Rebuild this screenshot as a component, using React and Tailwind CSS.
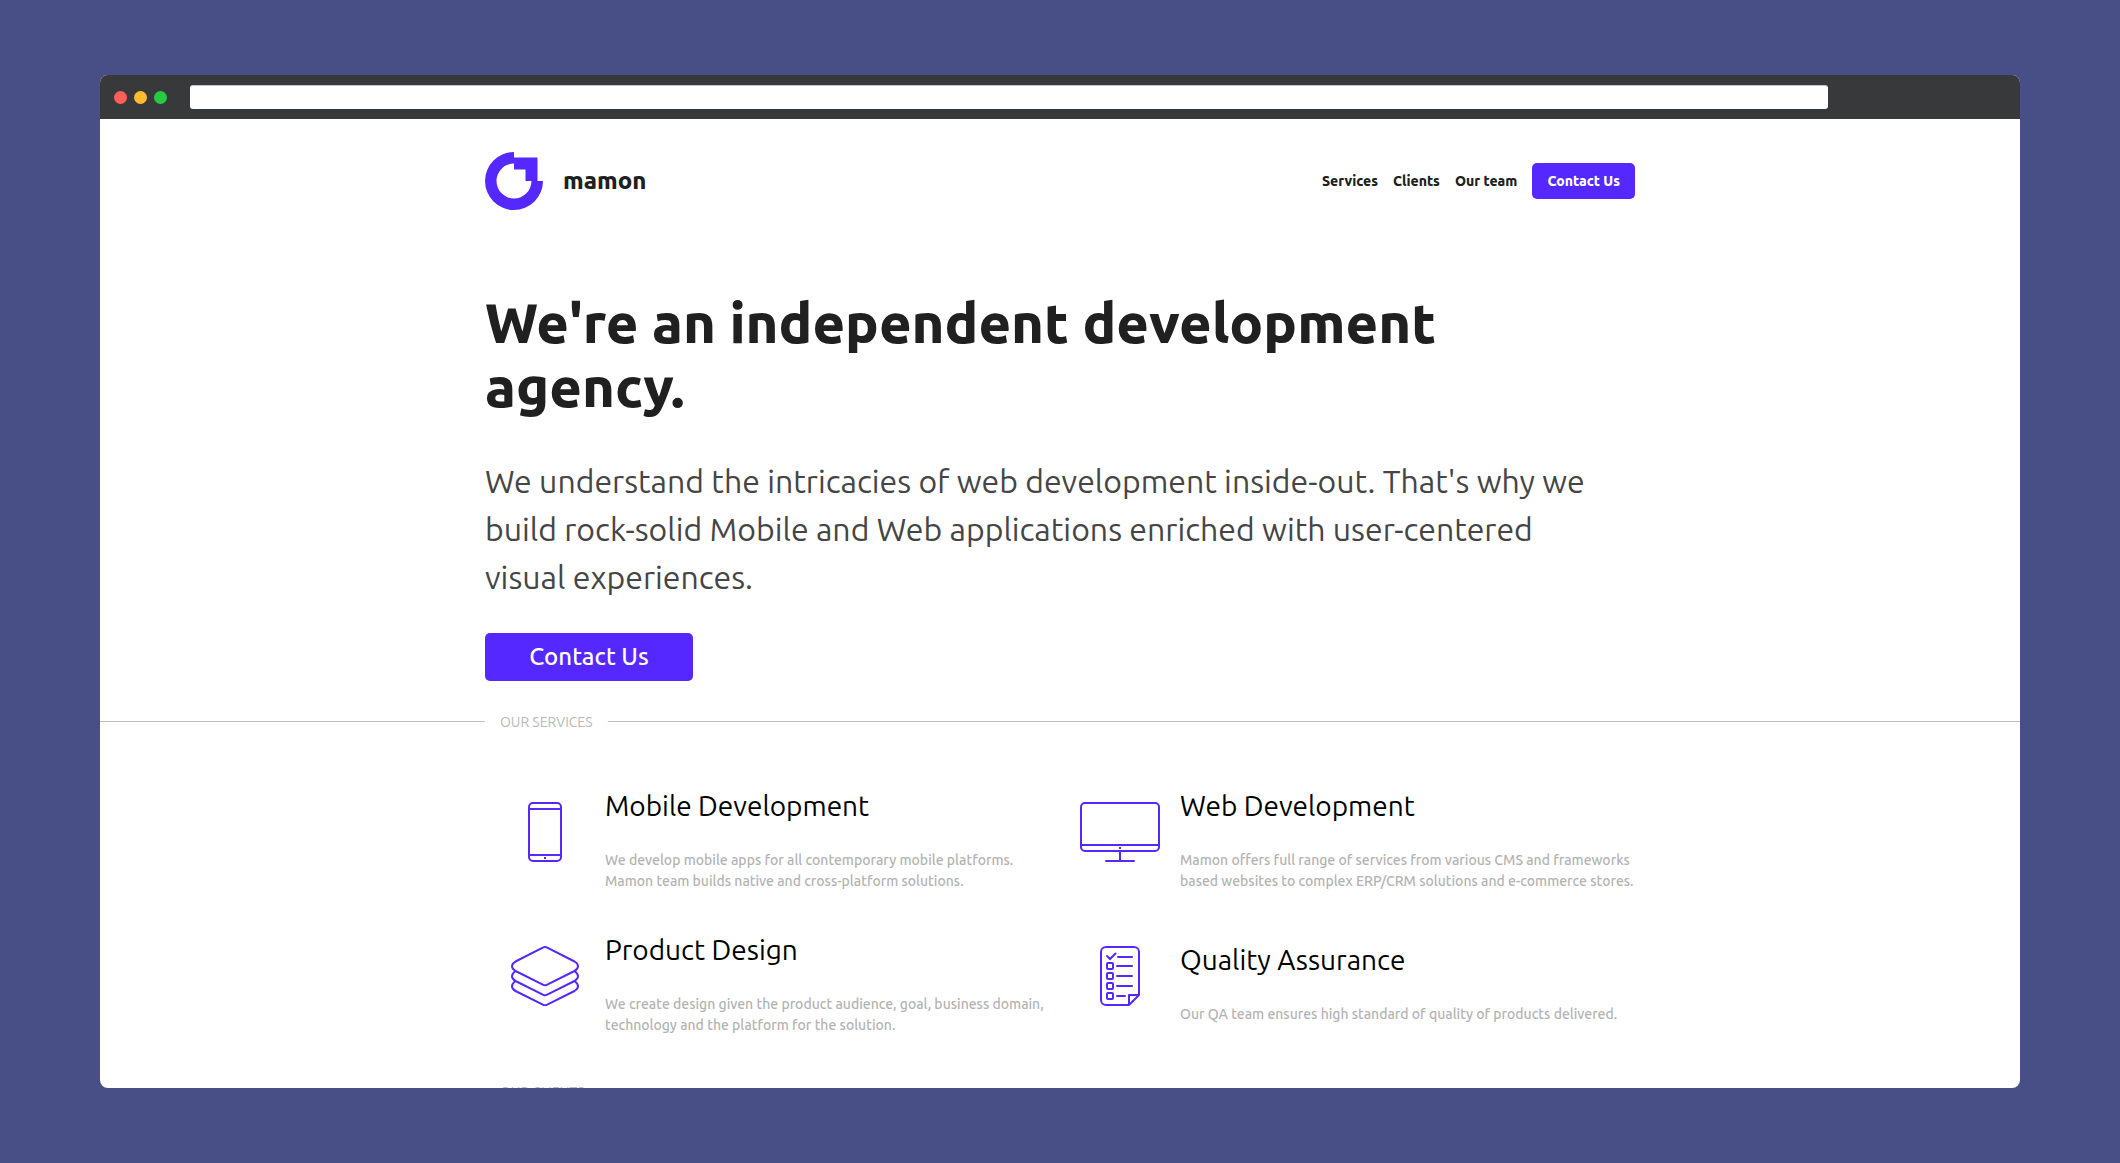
const NAV_LINKS = ["Services", "Clients", "Our team"];

function Logo() {
  return (
    <svg className="size-[58px] shrink-0" viewBox="0 0 58 58" aria-hidden="true">
      <path
        fill="#5428ff"
        d="M29 0A29 29 0 1 0 58 29H52.5V5.5H29ZM29 17.5H40.5V29H46.5A17.5 17.5 0 1 1 29 11.5Z"
      />
    </svg>
  );
}

function PhoneIcon() {
  return (
    <svg width="34" height="60" viewBox="0 0 34 60" fill="none" stroke="#5428ff" strokeWidth="2" aria-hidden="true">
      <rect x="1" y="1" width="32" height="58" rx="4" />
      <path d="M1 7H33M1 53H33" />
      <path d="M16 56H18" />
    </svg>
  );
}

function MonitorIcon() {
  return (
    <svg width="80" height="60" viewBox="0 0 80 60" fill="none" stroke="#5428ff" strokeWidth="2" aria-hidden="true">
      <rect x="1" y="1" width="78" height="48" rx="4" />
      <path d="M1 43H79M39 46H41M40 49V59" />
      <path d="M26 59H54" strokeLinecap="round" />
    </svg>
  );
}

function LayersIcon() {
  return (
    <svg
      width="70"
      height="60"
      viewBox="0 0 70 60"
      fill="none"
      stroke="#5428ff"
      strokeWidth="2"
      strokeLinejoin="round"
      aria-hidden="true"
    >
      <path d="M33.3 1.4Q35 .6 36.7 1.4L64.5 15.5Q68 17.5 68 20.3T64.5 25L36.7 38.8Q35 39.6 33.3 38.8L5.5 25Q2 23 2 20.3T5.5 15.5Z" />
      <path d="M5.5 25Q2 27.5 2 30.3T5.5 35L33.3 48.8Q35 49.6 36.7 48.8L64.5 35Q68 33 68 30.3T64.5 25" />
      <path d="M5.5 35Q2 37.5 2 40.3T5.5 45L33.3 58.8Q35 59.6 36.7 58.8L64.5 45Q68 43 68 40.3T64.5 35" />
    </svg>
  );
}

function ChecklistIcon() {
  return (
    <svg
      width="40"
      height="60"
      viewBox="0 0 40 60"
      fill="none"
      stroke="#5428ff"
      strokeWidth="2"
      strokeLinecap="round"
      aria-hidden="true"
    >
      <path d="M29 59H6A5 5 0 0 1 1 54V6A5 5 0 0 1 6 1H34A5 5 0 0 1 39 6V49L29 59V49H39" strokeLinejoin="round" />
      <path d="M7 10L10 13L15.5 7.5M18 11H32M17 20H32M17 30H32M17 40H32M17 50H25" />
      <rect x="7" y="17" width="6" height="6" rx="1" />
      <rect x="7" y="27" width="6" height="6" rx="1" />
      <rect x="7" y="37" width="6" height="6" rx="1" />
      <rect x="7" y="47" width="6" height="6" rx="1" />
    </svg>
  );
}

const SERVICES = [
  {
    title: "Mobile Development",
    Icon: PhoneIcon,
    lines: ["We develop mobile apps for all contemporary mobile platforms.", "Mamon team builds native and cross-platform solutions."],
  },
  {
    title: "Web Development",
    Icon: MonitorIcon,
    lines: ["Mamon offers full range of services from various CMS and frameworks", "based websites to complex ERP/CRM solutions and e-commerce stores."],
  },
  {
    title: "Product Design",
    Icon: LayersIcon,
    lines: ["We create design given the product audience, goal, business domain,", "technology and the platform for the solution."],
  },
  {
    title: "Quality Assurance",
    Icon: ChecklistIcon,
    lines: ["Our QA team ensures high standard of quality of products delivered."],
  },
];

function SectionHeading({ children }) {
  return (
    <div className="grid grid-cols-[1fr_min(1150px,100%)_1fr] items-center">
      <span className="h-px bg-[#bfbfbf]" />
      <div className="flex items-center">
        <h2 className="px-[15px] pt-0.5 text-[14px] leading-[21px] text-[#b8b8b8]">{children}</h2>
        <span className="h-px flex-1 bg-[#bfbfbf]" />
      </div>
      <span className="h-px bg-[#bfbfbf]" />
    </div>
  );
}

function Service({ title, lines, Icon }) {
  return (
    <article className="flex min-h-36 items-center">
      <div className="flex w-[120px] shrink-0 justify-center">
        <Icon />
      </div>
      <div className="pt-3">
        <h3 className="text-[28px] leading-[42px] text-black">{title}</h3>
        <p className="mt-[23px] text-[14px] leading-[21px] font-medium text-[#b3b3b3]">
          {lines.map((line) => (
            <span key={line} className="block">
              {line}
            </span>
          ))}
        </p>
      </div>
    </article>
  );
}

export default function App() {
  return (
    <div className="flex h-screen flex-col bg-[#484f86] px-[100px] py-[75px] font-['Ubuntu','Noto_Sans',sans-serif]">
      <div className="flex min-h-0 flex-1 flex-col overflow-hidden rounded-lg bg-white">
        <div className="flex h-11 shrink-0 items-center bg-[#38393b] pr-48 pl-[14px]">
          <div className="flex gap-[7px]">
            <span className="size-[13px] rounded-full bg-[#ff5f57]" />
            <span className="size-[13px] rounded-full bg-[#ffbd2e]" />
            <span className="size-[13px] rounded-full bg-[#28ca42]" />
          </div>
          <input
            type="text"
            aria-label="Address"
            className="ml-[23px] h-6 min-w-0 flex-1 rounded-[3px] border-t border-[#c4c4cc] bg-white px-2 text-[14px] outline-none"
          />
        </div>

        <div className="min-h-0 flex-1 overflow-hidden">
          <div className="mx-auto max-w-[1150px]">
            <header className="flex items-center justify-between pt-[33px]">
              <a href="#" className="flex items-center gap-5 text-[24px] font-extrabold text-[#202020]">
                <Logo />
                mamon
              </a>
              <nav className="flex items-center gap-[15px] text-[14px] font-extrabold text-[#202020]">
                {NAV_LINKS.map((label) => (
                  <a key={label} href="#">
                    {label}
                  </a>
                ))}
                <button type="button" className="h-9 rounded-[5px] bg-[#5428ff] px-[15px] text-white">
                  Contact Us
                </button>
              </nav>
            </header>

            <main className="pt-[81px]">
              <h1 className="max-w-[1000px] text-[56px] leading-[64px] font-extrabold text-[#202020]">
                We're an independent development agency.
              </h1>
              <p className="mt-[38px] max-w-[1120px] text-[32px] leading-[48px] text-[#454545]">
                We understand the intricacies of web development inside-out. That's why we build rock-solid Mobile and
                Web applications enriched with user-centered visual experiences.
              </p>
              <button
                type="button"
                className="mt-8 block h-12 w-52 rounded-[5px] bg-[#5428ff] text-[24px] font-medium text-white"
              >
                Contact Us
              </button>
            </main>
          </div>

          <section className="mt-[29px]">
            <SectionHeading>OUR SERVICES</SectionHeading>
            <div className="mx-auto mt-[27px] grid max-w-[1150px] grid-cols-2">
              {SERVICES.map((service) => (
                <Service key={service.title} {...service} />
              ))}
            </div>
          </section>

          <section className="mt-8">
            <SectionHeading>OUR CLIENTS</SectionHeading>
          </section>
        </div>
      </div>
    </div>
  );
}
